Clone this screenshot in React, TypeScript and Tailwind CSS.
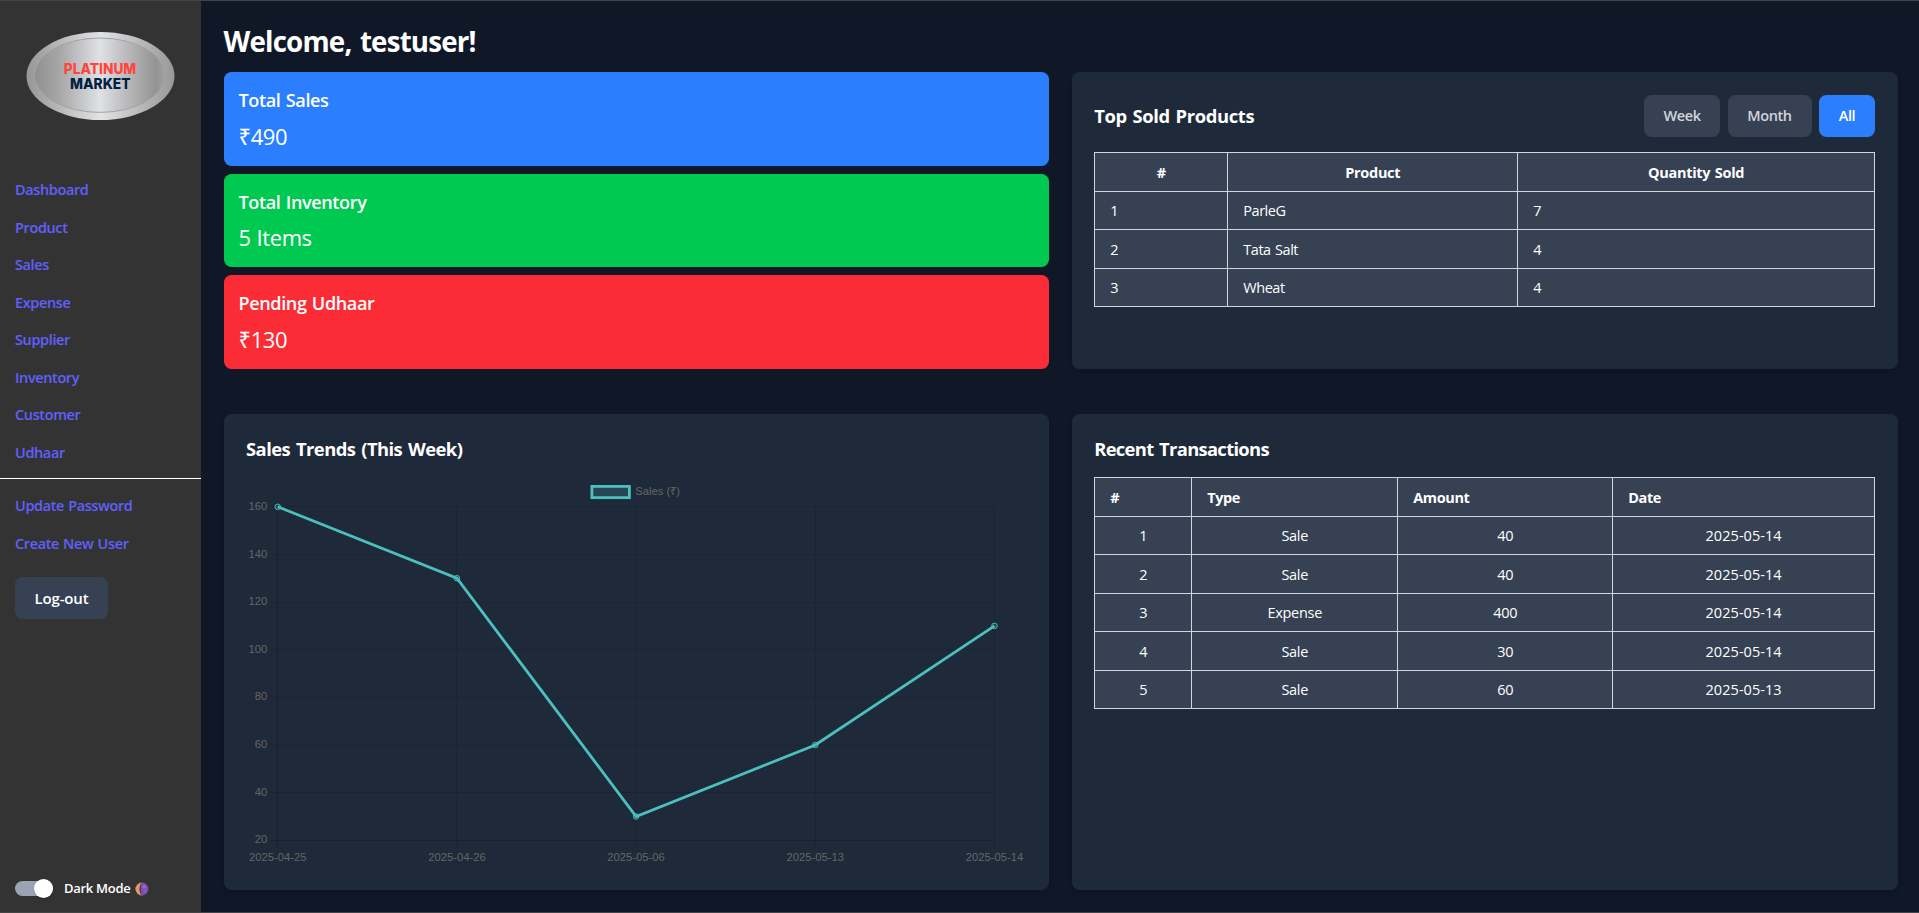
import React from "react";

const links = ["Dashboard", "Product", "Sales", "Expense", "Supplier", "Inventory", "Customer", "Udhaar"];

const stats = [
  { title: "Total Sales", value: "₹490", color: "bg-blue-500" },
  { title: "Total Inventory", value: "5 Items", color: "bg-green-500" },
  { title: "Pending Udhaar", value: "₹130", color: "bg-red-500" },
];

const products = [
  ["1", "ParleG", "7"],
  ["2", "Tata Salt", "4"],
  ["3", "Wheat", "4"],
];

const transactions = [
  ["1", "Sale", "40", "2025-05-14"],
  ["2", "Sale", "40", "2025-05-14"],
  ["3", "Expense", "400", "2025-05-14"],
  ["4", "Sale", "30", "2025-05-14"],
  ["5", "Sale", "60", "2025-05-13"],
];

function Logo() {
  return (
    <svg className="ml-[25px] block h-[90px] w-[150px]" viewBox="0 0 150 90">
      <defs>
        <linearGradient id="rim">
          <stop offset="0" stopColor="#969696" />
          <stop offset="0.2" stopColor="#b4b4b4" />
          <stop offset="0.5" stopColor="#e2e3e6" />
          <stop offset="0.75" stopColor="#bcbcbd" />
          <stop offset="1" stopColor="#989898" />
        </linearGradient>
        <linearGradient id="face">
          <stop offset="0" stopColor="#8f8f8f" />
          <stop offset="0.2" stopColor="#a8a8a8" />
          <stop offset="0.5" stopColor="#e0e1e5" />
          <stop offset="0.75" stopColor="#b2b2b3" />
          <stop offset="0.93" stopColor="#939393" />
          <stop offset="1" stopColor="#a2a2a2" />
        </linearGradient>
      </defs>
      <ellipse cx="75.500" cy="45" rx="74" ry="44" fill="url(#rim)" />
      <ellipse cx="74.800" cy="44.200" rx="65.300" ry="37.200" fill="url(#face)" stroke="#a3a3a5" strokeWidth="1" />
      <text x="38.800" y="42.800" textLength="72.500" lengthAdjust="spacingAndGlyphs" fontFamily="Inter" fontWeight="800" fontSize="15" fill="#ff463c">
        PLATINUM
      </text>
      <text x="45" y="57.900" textLength="60.500" lengthAdjust="spacingAndGlyphs" fontFamily="Inter" fontWeight="800" fontSize="15" fill="#02203f">
        MARKET
      </text>
    </svg>
  );
}

function Moon() {
  return (
    <svg className="size-[14px]" viewBox="0 0 14 14">
      <circle cx="7" cy="7" r="6.5" fill="#7d4fae" />
      <path d="M7 .5A6.500 6.500 0 0 0 7 13.500C3.800 10.500 3.800 3.500 7 .5Z" fill="#dd9a5c" />
      <path d="M7 .5C3.800 3.500 3.800 10.500 7 13.500C5.500 10 5.300 4 7 .5Z" fill="#4f3157" />
      <circle cx="9.200" cy="4.800" r="1.700" fill="#9a6cc9" />
      <circle cx="10" cy="9" r="1.100" fill="#9163c0" />
    </svg>
  );
}

const chartX = [277.7, 456.9, 636.1, 815.3, 994.5];
const chartDates = ["2025-04-25", "2025-04-26", "2025-05-06", "2025-05-13", "2025-05-14"];
const chartValues = [160, 130, 30, 60, 110];
const ticks = [160, 140, 120, 100, 80, 60, 40, 20];
const yOf = (v: number) => 840.3 - ((v - 20) / 140) * 333.5;

function SalesChart() {
  return (
    <svg className="block h-[390px] w-[781px]" viewBox="246 477 781 390" fontFamily="Liberation Sans, sans-serif" fontSize="11.25" fill="#666">
      {ticks.map((t) => {
        const y = Math.floor(yOf(t)) + 0.5;
        return (
          <g key={t}>
            <line x1="270.500" x2="994.500" y1={y} y2={y} stroke="#000" strokeOpacity={t === 20 ? 0.16 : 0.1} />
            <text x="267.200" y={yOf(t) + 3.1} textAnchor="end">{t}</text>
          </g>
        );
      })}
      {chartX.map((x, i) => (
        <g key={x}>
          <line x1={Math.floor(x) + 0.5} x2={Math.floor(x) + 0.5} y1="506.500" y2="848" stroke="#000" strokeOpacity={i === 0 ? 0.16 : 0.1} />
          <text x={x} y="861" textAnchor="middle">{chartDates[i]}</text>
        </g>
      ))}
      <rect x="591.900" y="486.400" width="37.500" height="11.250" fill="#4bc0c0" fillOpacity="0.2" stroke="#4bc0c0" strokeWidth="2.800" />
      <text x="635.300" y="495">Sales (₹)</text>
      <polyline points={chartX.map((x, i) => `${x},${yOf(chartValues[i])}`).join(" ")} fill="none" stroke="#4bc0c0" strokeWidth="2.800" strokeLinejoin="miter" />
      {chartX.map((x, i) => (
        <circle key={x} cx={x} cy={yOf(chartValues[i])} r="2.800" fill="#4bc0c0" fillOpacity="0.2" stroke="#4bc0c0" strokeWidth="0.940" />
      ))}
    </svg>
  );
}

const navLink = "block py-2 text-[14.5px] leading-[22.5px] font-semibold tracking-[-0.38px] [word-spacing:0.7px] text-indigo-500";
const panel = "rounded-[7.5px] bg-gray-800 p-6 shadow-md";
const cell = "border border-gray-300 px-4 pt-[8.5px] pb-[6.5px]";
const panelTitle = "text-[18.4px] leading-[26.25px] font-bold tracking-[-0.55px] [word-spacing:1.6px]";
const button = "h-[42.25px] rounded-[7.5px] pt-px";

export default function App() {
  return (
    <div className="flex h-[913px] w-full overflow-hidden border-y border-[#444] bg-gray-900 font-['Open_Sans','Noto_Sans',sans-serif] text-[14.5px] leading-[22.5px] text-white [--spacing:3.75px]">
      <aside className="flex w-[201px] shrink-0 flex-col bg-[#333] pt-[30.25px]">
        <Logo />
        <nav className="mt-[50.5px] px-4">
          {links.map((l) => (
            <a key={l} className={navLink}>{l}</a>
          ))}
        </nav>
        <div className="mt-[6px] border-t border-white px-4 pt-[8.75px]">
          <a className={navLink}>Update Password</a>
          <a className={navLink}>Create New User</a>
          <button className="mt-[14.25px] h-[42px] w-[93px] rounded-[7.5px] bg-gray-700 text-[15px] font-semibold tracking-[-0.15px]">Log-out</button>
        </div>
        <div className="mt-auto mb-[14px] flex h-[19px] items-center px-4">
          <span className="flex h-[15px] w-[38px] items-center justify-end rounded-full bg-[#9ca3b4]">
            <span className="size-[19px] rounded-full bg-white shadow" />
          </span>
          <span className="ml-[11px] mr-[5px] text-[13px] font-semibold tracking-[-0.28px]">Dark Mode</span>
          <Moon />
        </div>
      </aside>

      <main className="flex min-w-0 flex-1 flex-col pt-[23.5px] pr-[21.5px] pb-6 pl-6">
        <h1 className="mb-[14px] text-[27.7px] leading-[33.75px] font-bold tracking-[-0.8px] [word-spacing:2px]">Welcome, testuser!</h1>

        <div className="grid grid-cols-2 gap-6">
          <div className="flex flex-col gap-2">
            {stats.map((s) => (
              <div key={s.title} className={`rounded-[7.5px] p-4 ${s.color}`}>
                <h2 className="mb-2 text-[18.1px] leading-[26.25px] font-semibold tracking-[-0.4px] [word-spacing:1px]">{s.title}</h2>
                <p className="text-[22px] leading-[30px] tracking-[-0.4px] [word-spacing:0.5px]">{s.value}</p>
              </div>
            ))}
          </div>
          <section className={panel}>
            <div className="mb-4 flex items-center justify-between">
              <h2 className="text-[18.4px] leading-[26.25px] font-bold tracking-[-0.35px] [word-spacing:1.2px]">Top Sold Products</h2>
              <div className="flex gap-2 font-semibold tracking-[-0.4px]">
                <button className={`${button} w-[76px] bg-gray-700 text-gray-300`}>Week</button>
                <button className={`${button} w-[84px] bg-gray-700 text-gray-300`}>Month</button>
                <button className={`${button} w-[56px] bg-blue-500 text-white`}>All</button>
              </div>
            </div>
            <table className="w-full table-fixed border-collapse bg-gray-700">
              <colgroup>
                <col className="w-[133px]" />
                <col className="w-[290px]" />
                <col />
              </colgroup>
              <thead>
                <tr className="font-bold tracking-[-0.3px] [word-spacing:1px]">
                  {["#", "Product", "Quantity Sold"].map((h) => (
                    <th key={h} className={cell}>{h}</th>
                  ))}
                </tr>
              </thead>
              <tbody className="tracking-[-0.45px] [word-spacing:1px]">
                {products.map((r) => (
                  <tr key={r[0]}>
                    {r.map((c, i) => (
                      <td key={i} className={cell}>{c}</td>
                    ))}
                  </tr>
                ))}
              </tbody>
            </table>
          </section>
        </div>

        <div className="mt-12 grid flex-1 grid-cols-2 gap-6">
          <section className={panel}>
            <h2 className={`mb-4 ${panelTitle}`}>Sales Trends (This Week)</h2>
            <SalesChart />
          </section>
          <section className={panel}>
            <h2 className="mb-4 text-[18.4px] leading-[26.25px] font-bold tracking-[-0.7px] [word-spacing:1.6px]">Recent Transactions</h2>
            <table className="w-full table-fixed border-collapse bg-gray-700">
              <colgroup>
                <col className="w-[97px]" />
                <col className="w-[206px]" />
                <col className="w-[215px]" />
                <col />
              </colgroup>
              <thead>
                <tr className="text-left font-bold tracking-[-0.4px]">
                  {["#", "Type", "Amount", "Date"].map((h) => (
                    <th key={h} className={cell}>{h}</th>
                  ))}
                </tr>
              </thead>
              <tbody className="text-center tracking-[-0.3px]">
                {transactions.map((r) => (
                  <tr key={r[0]}>
                    {r.map((c, i) => (
                      <td key={i} className={`${cell} ${i === 3 ? "tracking-[0.05px]" : ""}`}>{c}</td>
                    ))}
                  </tr>
                ))}
              </tbody>
            </table>
          </section>
        </div>
      </main>
    </div>
  );
}
